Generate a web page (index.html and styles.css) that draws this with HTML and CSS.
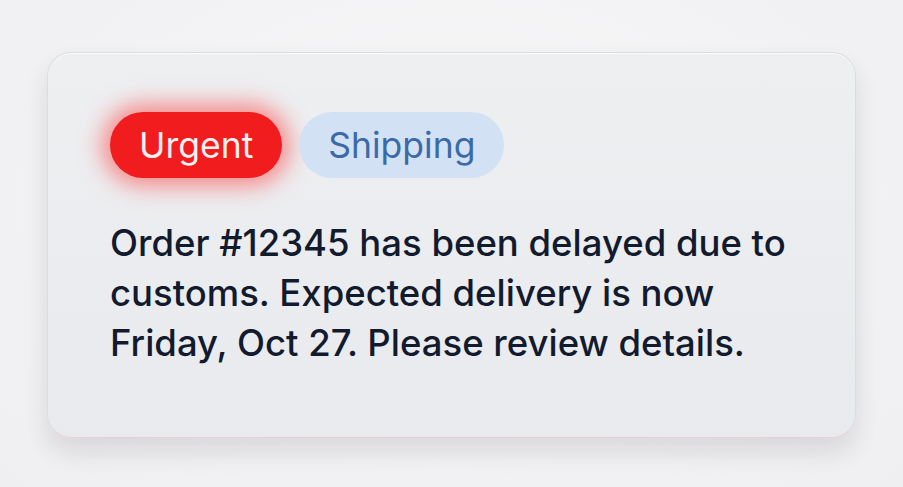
FILE: index.html
```html
<!DOCTYPE html>
<html lang="en">
<head>
  <meta charset="UTF-8" />
  <meta name="viewport" content="width=device-width, initial-scale=1.0"/>
  <title>Notification</title>
  <link rel="stylesheet" href="styles.css">
</head>
<body>
  <div class="card">
    <div class="tags">
      <span class="tag urgent">Urgent</span>
      <span class="tag shipping">Shipping</span>
    </div>
    <p class="message">Order #12345 has been delayed due to customs. Expected delivery is now Friday, Oct 27. Please review details.</p>
  </div>
</body>
</html>
```

FILE: styles.css
```css
body {
  margin: 0;
  height: 487px;
  font-family: Inter, "Noto Sans", sans-serif;
  background: radial-gradient(ellipse at 50% 40%, #f7f7f8 0%, #efeff1 100%);
  overflow: hidden;
}
.card {
  box-sizing: border-box;
  width: 809px;
  height: 386px;
  margin: 52px 0 0 47px;
  padding: 59px 40px 0 62px;
  border-radius: 24px;
  background: linear-gradient(180deg, #eeeff1 0%, #e9eaed 100%);
  border: 1px solid #d9dde3;
  border-bottom-color: #e8cfd4;
  box-shadow: 0 14px 24px rgba(40, 45, 60, 0.12), inset 0 1px 0 rgba(255,255,255,0.8);
}
.tags {
  display: flex;
  gap: 17px;
}
.tag {
  height: 66px;
  display: flex;
  align-items: center;
  padding: 0 29px;
  border-radius: 33px;
  font-size: 35.5px;
}
.urgent {
  background: #f01c1e;
  color: #fff1f0;
  box-shadow: 0 0 22px 8px rgba(255, 40, 40, 0.5);
}
.shipping {
  background: #d3e1f5;
  color: #3a6aa8;
}
.message {
  max-width: 690px;
  margin: 40px 0 0;
  font-size: 36.5px;
  font-weight: 450;
  line-height: 50px;
  color: #121a2e;
}
```
